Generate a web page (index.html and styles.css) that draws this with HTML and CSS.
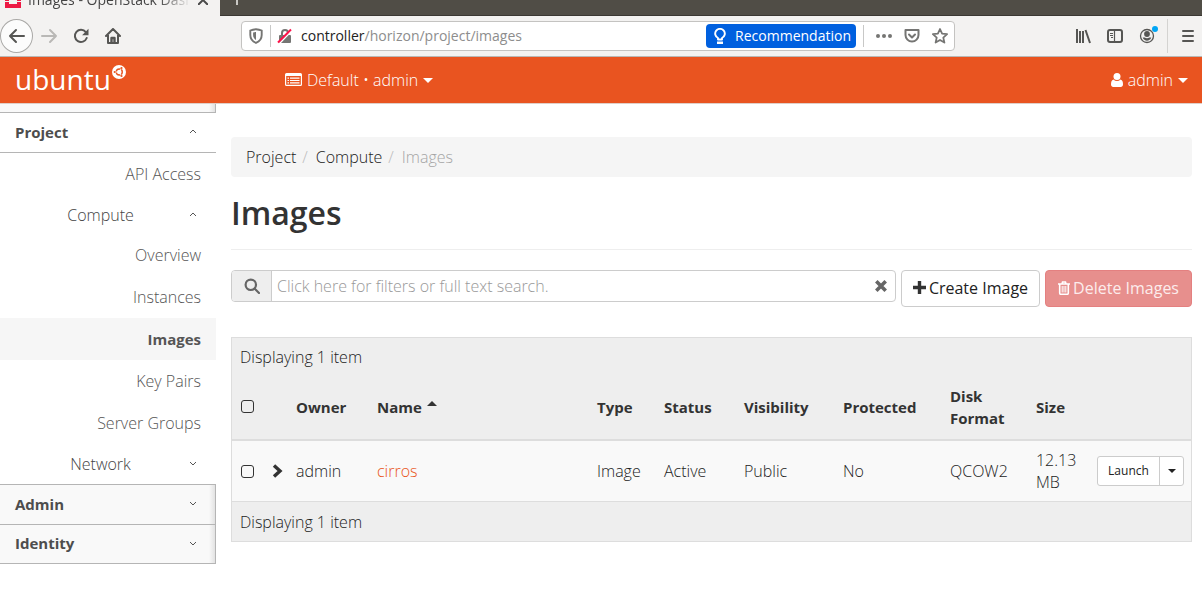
FILE: index.html
```html
<!DOCTYPE html>
<html lang="en">
<head>
<meta charset="utf-8">
<title>Images - OpenStack Dashboard</title>
<meta name="viewport" content="width=device-width, initial-scale=1">
<link rel="stylesheet" href="styles.css">
</head>
<body>
<div class="tabs">
  <div class="tab">
    <svg class="tab-logo" width="16" height="16" viewBox="0 0 16 16" fill="#ed1944"><path d="M0 0h16v5h-4V4H4v1H0zM0 6h4v3H0zM12 6h4v3h-4zM0 10h4v2h8v-2h4v6H0z"/></svg>
    <span class="tab-title">Images - OpenStack Dash</span>
    <button class="icon-button" aria-label="Close tab"><svg width="10" height="10" viewBox="0 0 10 10" fill="none" stroke="#4a4a4a" stroke-width="2"><path d="M0 0l10 10M10 0L0 10"/></svg></button>
  </div>
  <button class="icon-button new-tab" aria-label="New tab"><svg width="12" height="12" viewBox="0 0 12 12" fill="none" stroke="#c9c8c4" stroke-width="2"><path d="M6 0v12M0 6h12"/></svg></button>
</div>

<div class="toolbar">
  <div class="nav-buttons">
    <button class="icon-button back" aria-label="Back"><svg width="18" height="16" viewBox="0 0 18 16" fill="none" stroke="#565654" stroke-width="2" stroke-linecap="round" stroke-linejoin="round"><path d="M8 2L2 8l6 6M2 8h14"/></svg></button>
    <button class="icon-button" aria-label="Forward" disabled><svg width="18" height="16" viewBox="0 0 18 16" fill="none" stroke="#b9b8b6" stroke-width="2" stroke-linecap="round" stroke-linejoin="round"><path d="M10 2l6 6-6 6M16 8H2"/></svg></button>
    <button class="icon-button" aria-label="Reload"><svg width="16" height="16" viewBox="0 0 16 16"><path d="M12.8 4.1A6.1 6.1 0 1 0 13.7 10" fill="none" stroke="#565654" stroke-width="2" stroke-linecap="round"/><path d="M15.5 .8v6.4H9.1z" fill="#565654"/></svg></button>
    <button class="icon-button" aria-label="Home"><svg width="18" height="16" viewBox="0 0 18 16" fill="none" stroke="#565654" stroke-width="2" stroke-linecap="round" stroke-linejoin="round"><path d="M2 8l7-7 7 7M4 7v8h10V7"/><path d="M7.5 14v-4h3v4" stroke-width="2.4"/></svg></button>
  </div>
  <div class="urlbar">
    <svg class="shield" width="14" height="16" viewBox="0 0 14 16"><path d="M7 1.2c2 .1 4 .5 5.700 1.300V7c0 4-2.300 6.500-5.700 7.900C3.600 13.500 1.300 11 1.300 7V2.500C3 1.700 5 1.300 7 1.200z" fill="none" stroke="#757573" stroke-width="1.900"/><path d="M7 4v8c-2-1.300-2.900-2.800-2.900-5V4.600C5 4.200 6 4 7 4z" fill="#757573"/></svg>
    <span class="separator"></span>
    <svg class="lock" width="16" height="16" viewBox="0 0 16 16"><path d="M5 7V5a3 3 0 0 1 6 0v2" fill="none" stroke="#757573" stroke-width="2"/><rect x="2" y="7" width="12" height="8" rx="1" fill="#757573"/><path d="M2.500 15.500L15 2.500" stroke="#fff" stroke-width="1.500"/><path d="M1 14.500L14 1.500" stroke="#ff1149" stroke-width="2"/></svg>
    <div class="address" role="textbox" aria-label="Address" contenteditable="true" spellcheck="false"><span class="host">controller</span>/horizon/project/images</div>
    <button class="recommendation"><svg width="12" height="16" viewBox="0 0 12 16"><path d="M4 11.500V10A4.800 4.800 0 1 1 8 10v1.500z" fill="none" stroke="#fff" stroke-width="1.900" stroke-linejoin="round"/><path d="M3 13.500h6v2.500H3z" fill="#fff"/></svg>Recommendation</button>
    <span class="separator"></span>
    <div class="page-actions">
      <button class="icon-button" aria-label="Page actions"><svg width="16" height="16" viewBox="0 0 16 16" fill="#757573"><circle cx="2" cy="8" r="2"/><circle cx="8" cy="8" r="2"/><circle cx="14" cy="8" r="2"/></svg></button>
      <button class="icon-button" aria-label="Save to Pocket"><svg width="16" height="16" viewBox="0 0 16 16" fill="none" stroke="#757573" stroke-width="2" stroke-linecap="round" stroke-linejoin="round"><path d="M1.500 2h13v5a6.500 6.500 0 0 1-13 0z"/><path d="M5 6.500l3 3 3-3"/></svg></button>
      <button class="icon-button" aria-label="Bookmark"><svg width="16" height="16" viewBox="0 0 16 16" fill="none" stroke="#757573" stroke-width="1.800" stroke-linejoin="round"><path d="M8 1l2.100 4.700 5 .5-3.800 3.400 1.100 5L8 12l-4.400 2.600 1.100-5L.9 6.200l5-.5z"/></svg></button>
    </div>
  </div>
  <div class="tool-buttons">
    <button class="icon-button" aria-label="Library"><svg width="16" height="16" viewBox="0 0 16 16" fill="none" stroke="#565654" stroke-width="2"><path d="M2 1v14M5 3v12M8 3v12M10.500 2l4.500 13"/></svg></button>
    <button class="icon-button" aria-label="Sidebars"><svg width="16" height="16" viewBox="0 0 16 16" fill="none" stroke="#565654"><rect x="1" y="2" width="14" height="12" rx="2" stroke-width="2"/><path d="M7.500 2v12M3 5.500h3M3 7.500h3M4 9.500h2" stroke-width="1.200"/></svg></button>
    <button class="icon-button account" aria-label="Account"><svg width="20" height="18" viewBox="0 0 20 18"><circle cx="8" cy="10" r="6.500" fill="none" stroke="#565654" stroke-width="1.300"/><circle cx="8" cy="8" r="2.900" fill="#565654"/><path d="M3.700 11.500h2c1.400 1 3.200 1 4.600 0h2c-1.500 4.200-7.100 4.200-8.600 0z" fill="#565654"/><circle cx="16" cy="3" r="3" fill="#00a5f5"/></svg></button>
    <span class="toolbar-separator"></span>
    <button class="icon-button" aria-label="Menu"><svg width="12" height="14" viewBox="0 0 12 14" stroke="#565654" stroke-width="2" stroke-linecap="round"><path d="M1 2h10M1 7h10M1 12h10"/></svg></button>
  </div>
</div>

<header class="site-header">
  <a class="brand" href="#">ubuntu<svg width="14" height="14" viewBox="0 0 14 14"><circle cx="7" cy="7" r="7" fill="#fff"/><circle cx="7.300" cy="7" r="3" fill="none" stroke="#e95420" stroke-width="1.400"/><path d="M7.300 7L3 7M7.300 7l2.600-4.500M7.300 7l2.600 4.500" stroke="#fff" stroke-width="1"/><g fill="#e95420"><circle cx="2.700" cy="7" r="1.100"/><circle cx="9.500" cy="3" r="1.100"/><circle cx="9.500" cy="11" r="1.100"/></g></svg></a>
  <button class="header-menu"><svg width="17" height="14" viewBox="0 0 17 14"><path fill="#fff" fill-rule="evenodd" d="M1.500 0h14A1.500 1.500 0 0 1 17 1.500v10a1.500 1.500 0 0 1-1.500 1.500h-14A1.500 1.500 0 0 1 0 11.500v-10A1.500 1.500 0 0 1 1.500 0zM1.200 3v8.800h14.600V3z"/><path d="M2.500 5.200h1.500M5 5.200h9.500M2.500 7.500h1.500M5 7.500h9.500M2.500 9.800h1.500M5 9.800h9.500" stroke="#fff" stroke-width="1.200"/></svg>Default • admin<span class="caret"></span></button>
  <button class="header-menu user-menu"><svg width="12" height="14" viewBox="0 0 12 14" fill="#fff"><circle cx="6" cy="3.500" r="3.500"/><path d="M2.500 6.500a4.800 4.800 0 0 0 7 0C11.500 7 12 9 12 11.500c0 1.500-1 2.500-2.200 2.500H2.200C1 14 0 13 0 11.500 0 9 .5 7 2.500 6.500z"/></svg>admin<span class="caret"></span></button>
</header>

<div class="layout">
  <nav class="sidebar" aria-label="Dashboard">
    <div class="panel-edge"></div>
    <button class="panel open">Project<svg class="chevron" width="8" height="5" viewBox="0 0 8 5"><path d="M1 4l3-3 3 3"/></svg></button>
    <a class="item" href="#">API Access</a>
    <button class="group">Compute<svg class="chevron" width="8" height="5" viewBox="0 0 8 5"><path d="M1 4l3-3 3 3"/></svg></button>
    <a class="item" href="#">Overview</a>
    <a class="item" href="#">Instances</a>
    <a class="item active" href="#">Images</a>
    <a class="item" href="#">Key Pairs</a>
    <a class="item" href="#">Server Groups</a>
    <button class="group">Network<svg class="chevron" width="8" height="5" viewBox="0 0 8 5"><path d="M1 1l3 3 3-3"/></svg></button>
    <button class="panel first-closed">Admin<svg class="chevron" width="8" height="5" viewBox="0 0 8 5"><path d="M1 1l3 3 3-3"/></svg></button>
    <button class="panel">Identity<svg class="chevron" width="8" height="5" viewBox="0 0 8 5"><path d="M1 1l3 3 3-3"/></svg></button>
  </nav>

  <main class="content">
    <nav class="breadcrumb" aria-label="Breadcrumb"><a href="#">Project</a><span class="slash">/</span><a href="#">Compute</a><span class="slash">/</span><span class="current">Images</span></nav>
    <h1 class="title">Images</h1>

    <div class="actions">
      <div class="search">
        <span class="search-icon"><svg width="16" height="16" viewBox="0 0 16 16" fill="none" stroke="#666" stroke-width="2.200"><circle cx="6.800" cy="6.800" r="5.200"/><path d="M10.500 10.500l4.500 4.500" stroke-linecap="round"/></svg></span>
        <input class="search-input" type="text" aria-label="Search images" placeholder="Click here for filters or full text search.">
        <button class="icon-button clear" aria-label="Clear search"><svg width="12" height="12" viewBox="0 0 12 12" stroke="#666" stroke-width="3.600"><path d="M1.300 1.300l9.400 9.400M10.700 1.300l-9.400 9.400"/></svg></button>
      </div>
      <button class="button"><svg width="13" height="13" viewBox="0 0 13 13" stroke="#333" stroke-width="3.400"><path d="M6.500 0v13M0 6.500h13"/></svg>Create Image</button>
      <button class="button danger" disabled><svg width="12" height="14" viewBox="0 0 12 14" fill="none" stroke="#fff"><path d="M0 3h12M4 3l.6-2h2.800L8 3" stroke-width="1.700"/><path d="M1.700 3v9c0 .8.400 1.300 1 1.300h6.600c.6 0 1-.5 1-1.300V3" stroke-width="1.600"/><path d="M4.200 5v6.500M6 5v6.500M7.800 5v6.500" stroke-width="1"/></svg>Delete Images</button>
    </div>

    <table class="images">
      <colgroup><col class="col-check"><col class="col-expand"><col class="col-owner"><col><col class="col-type"><col class="col-status"><col class="col-visibility"><col class="col-protected"><col class="col-format"><col class="col-size"><col class="col-actions"></colgroup>
      <thead>
        <tr class="summary top"><td colspan="11">Displaying 1 item</td></tr>
        <tr class="headings">
          <th><input class="check" type="checkbox" aria-label="Select all"></th><th></th>
          <th>Owner</th><th>Name<span class="sort-up"></span></th><th>Type</th><th>Status</th><th>Visibility</th><th>Protected</th><th>Disk Format</th><th>Size</th><th></th>
        </tr>
      </thead>
      <tbody>
        <tr class="record">
          <td><input class="check" type="checkbox" aria-label="Select cirros"></td>
          <td><button class="icon-button" aria-label="Show details"><svg width="11" height="14" viewBox="0 0 11 14" fill="none" stroke="#333" stroke-width="3.400"><path d="M2 1.500L8 7l-6 5.500"/></svg></button></td>
          <td>admin</td><td><a class="image-link" href="#">cirros</a></td><td>Image</td><td>Active</td><td>Public</td><td>No</td><td>QCOW2</td><td>12.13 MB</td>
          <td class="row-actions"><div class="split"><button class="launch">Launch</button><button class="more" aria-label="More actions"><span class="caret"></span></button></div></td>
        </tr>
      </tbody>
      <tfoot><tr class="summary"><td colspan="11">Displaying 1 item</td></tr></tfoot>
    </table>
  </main>
</div>
</body>
</html>
```
FILE: styles.css
```css
* { box-sizing: border-box; }

body {
  margin: 0;
  background: #fff;
  color: #222;
  font: 300 16px/22px "Open Sans", "Noto Sans", sans-serif;
}

button, input { font: inherit; color: inherit; }
button { padding: 0; border: 0; background: none; }
svg { display: block; flex: none; }
a { color: inherit; text-decoration: none; }

.icon-button {
  display: flex;
  align-items: center;
  justify-content: center;
  flex: none;
}

/* Browser tabs */
.tabs {
  display: flex;
  align-items: flex-end;
  height: 16px;
  overflow: hidden;
  background: #504d46;
  font-weight: 400;
}

.tab {
  display: flex;
  align-items: center;
  gap: 7px;
  width: 220px;
  height: 32px;
  padding: 0 12px 0 5px;
  background: #f3f2f1;
  color: #444;
}

.tab-title {
  flex: 1;
  overflow: hidden;
  white-space: nowrap;
  font-size: 14px;
  -webkit-mask-image: linear-gradient(to right, #000 80%, transparent);
  mask-image: linear-gradient(to right, #000 80%, transparent);
}

.new-tab {
  flex: 1;
  height: 34px;
  padding-left: 11px;
  justify-content: flex-start;
  border-bottom: 1px solid #3b3833;
}

/* Browser toolbar */
.toolbar {
  display: flex;
  align-items: center;
  height: 41px;
  border-bottom: 1px solid #b9b8b5;
  background: #f3f2f1;
  font-weight: 400;
}

.nav-buttons {
  display: flex;
  align-items: center;
  gap: 15px;
  width: 241px;
}

.back {
  width: 33px;
  height: 34px;
  margin-right: -8px;
  border: 1px solid #a9a8a6;
  border-radius: 50%;
  background: #fcfcfc;
}

.urlbar {
  display: flex;
  align-items: center;
  flex: 1;
  height: 30px;
  padding: 0 6px 0 7px;
  border: 1px solid #c4c3c1;
  border-radius: 4px;
  background: #fff;
}

.separator {
  width: 1px;
  height: 22px;
  margin: 0 6px 0 7px;
  background: #c8c8c7;
}

.address {
  flex: 1;
  min-width: 0;
  margin-left: 8px;
  overflow: hidden;
  color: #8d8d8d;
  font-size: 14px;
  white-space: nowrap;
}

.host { color: #222; }

.recommendation {
  display: flex;
  align-items: center;
  gap: 9px;
  height: 24px;
  padding: 0 5px 0 8px;
  border-radius: 4px;
  background: #0060df;
  color: #fff;
  font-size: 14px;
}

.page-actions { display: flex; gap: 12px; margin-left: 6px; }

.tool-buttons {
  display: flex;
  align-items: center;
  justify-content: flex-end;
  gap: 16px;
  width: 247px;
  padding-right: 8px;
}

.account { margin-right: -8px; padding-bottom: 3px; }
.toolbar-separator { width: 1px; height: 34px; margin-right: -2px; background: #d4d3d1; }

/* Site header */
.site-header {
  display: flex;
  align-items: center;
  height: 47px;
  padding: 0 14px 0 15px;
  border-bottom: 1px solid #e0cfc8;
  background: #e95420;
  color: #fff;
}

.brand {
  display: flex;
  align-items: flex-start;
  gap: 1px;
  width: 270px;
  padding-bottom: 2px;
  font-size: 28px;
  line-height: 28px;
  font-weight: 400;
}

.header-menu { display: flex; align-items: center; gap: 5px; }
.user-menu { margin-left: auto; }

.caret {
  display: inline-block;
  border: 5px solid transparent;
  border-top-color: currentColor;
  border-bottom: 0;
}

/* Sidebar */
.layout { display: flex; align-items: flex-start; }

.sidebar {
  display: flex;
  flex-direction: column;
  flex: none;
  width: 216px;
  color: #444;
}

.panel-edge, .panel {
  border: solid #b5b5b5;
  border-width: 0 1px 1px 0;
  background: linear-gradient(to left, #e2e2e2, #f9f9f9 6px);
}

.panel-edge { height: 9px; }

.panel {
  display: flex;
  align-items: center;
  justify-content: space-between;
  height: 39px;
  padding: 0 18px 2px 15px;
  color: #4d4d4d;
  font-size: 15px;
  font-weight: 700;
}

.panel.open { height: 40px; border-right: 0; padding-right: 19px; background: #fff; }
.panel.first-closed { height: 41px; margin-top: 1px; border-top-width: 1px; }

.item {
  height: 42px;
  padding: 10px 15px;
  text-align: right;
  color: #555;
}

.item.active { background: #f6f6f6; font-size: 15px; font-weight: 700; }

.group {
  display: grid;
  grid-template-columns: 1fr 8px;
  align-items: center;
  height: 39px;
  padding: 0 19px 0 12px;
}

.chevron { fill: none; stroke: #555; }

/* Content */
.content { flex: 1; min-width: 0; padding: 33px 10px 20px 15px; }

.breadcrumb {
  display: flex;
  height: 40px;
  padding: 9px 15px;
  border-radius: 4px;
  background: #f5f5f5;
}

.slash { padding: 0 8px 0 6px; color: #bbb; }
.current { color: #a5a5a5; }

.title {
  margin: 0 0 20px;
  padding: 15px 0;
  border-bottom: 1px solid #eee;
  color: #333;
  font-size: 32px;
  line-height: 42px;
  font-weight: 600;
}

.actions { display: flex; align-items: flex-start; gap: 5px; margin-bottom: 30px; }

.search {
  display: flex;
  flex: 1;
  height: 32px;
  overflow: hidden;
  border: 1px solid #ccc;
  border-radius: 4px;
}

.search-icon {
  display: grid;
  place-items: center;
  width: 40px;
  border-right: 1px solid #ccc;
  background: #eee;
}

.search-input { flex: 1; min-width: 0; padding: 0 5px; border: 0; outline: 0; background: #fff; }
.search-input::placeholder { color: #999; opacity: 1; }
.clear { padding: 0 8px; }

.button {
  display: flex;
  align-items: center;
  gap: 3px;
  height: 37px;
  padding: 0 11px 2px;
  border: 1px solid #ccc;
  border-radius: 4px;
  background: #fff;
  font-weight: 400;
  white-space: nowrap;
}

.button.danger { padding: 0 12px 2px; border-color: #e48080; background: #e78f8d; color: #fcecec; }

/* Image table */
.images {
  width: 100%;
  table-layout: fixed;
  border: 1px solid #ddd;
  border-spacing: 0;
}

.images th, .images td { padding: 8px; text-align: left; }
.images th { padding-bottom: 10px; color: #333; font-size: 15px; font-weight: 700; }
.summary, .headings { background: #eee; }
.images .summary td { height: 40px; }
.images .top td { height: 38px; }
.images .headings th { height: 65px; border-bottom: 2px solid #ddd; }
.record { background: #f9f9f9; }
.images .record td { height: 60px; }
.images .record .row-actions { padding-right: 7px; }
.images tfoot td { border-top: 1px solid #ddd; }

.col-check { width: 32px; }
.col-expand { width: 24px; }
.col-owner { width: 81px; }
.col-type { width: 67px; }
.col-status { width: 80px; }
.col-visibility { width: 99px; }
.col-protected { width: 107px; }
.col-format { width: 86px; }
.col-size { width: 61px; }
.col-actions { width: 102px; }

.check {
  display: block;
  width: 13px;
  height: 13px;
  margin: 0 0 0 1px;
  appearance: none;
  border: 1px solid #333;
  border-radius: 3px;
}

.check:checked { background: #444; }

.sort-up {
  display: inline-block;
  margin-left: 5px;
  border: 5px solid transparent;
  border-top: 0;
  border-bottom-color: #333;
  vertical-align: 7px;
}

.image-link { color: #e95420; }

.split {
  display: flex;
  height: 30px;
  border: 1px solid #ccc;
  border-radius: 3px;
  background: #fff;
  font-size: 12px;
  font-weight: 400;
}

.launch { flex: 1; border-right: 1px solid #ccc; }
.more { display: grid; place-items: center; width: 23px; }
.more .caret { border-width: 4px 4px 0; }
```
